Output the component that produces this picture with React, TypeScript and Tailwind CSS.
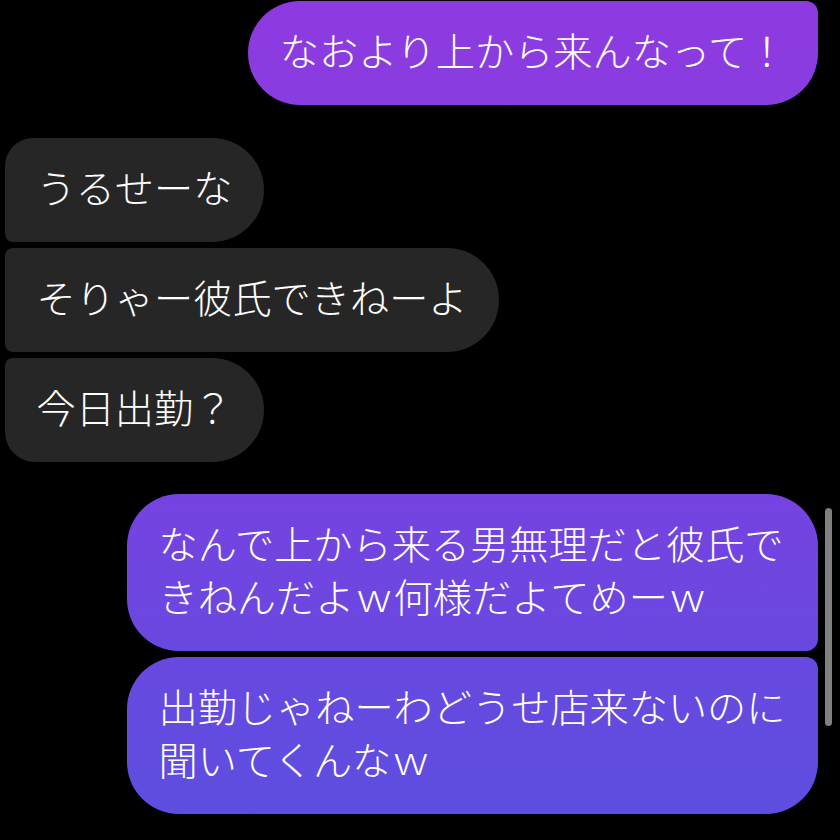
const font = { fontFamily: '"Noto Sans CJK JP", "Noto Sans", sans-serif' };

type Msg = { text: string; mine: boolean; corners: string };

const messages: Msg[] = [
  { text: 'なおより上から来んなって！', mine: true, corners: 'rounded-[52px] rounded-tr-[12px]' },
  { text: 'うるせーな', mine: false, corners: 'rounded-r-[52px] rounded-tl-[28px] rounded-bl-[8px]' },
  { text: 'そりゃー彼氏できねーよ', mine: false, corners: 'rounded-r-[52px] rounded-l-[8px]' },
  { text: '今日出勤？', mine: false, corners: 'rounded-r-[52px] rounded-tl-[8px] rounded-bl-[30px]' },
  {
    text: 'なんで上から来る男無理だと彼氏できねんだよｗ何様だよてめーｗ',
    mine: true,
    corners: 'rounded-[52px] rounded-br-[12px]',
  },
  {
    text: '出勤じゃねーわどうせ店来ないのに聞いてくんなｗ',
    mine: true,
    corners: 'rounded-[52px] rounded-tr-[12px]',
  },
];

function Bubble({ msg }: { msg: Msg }) {
  return (
    <div
      className={`max-w-[691px] px-[31.5px] pt-[21.5px] pb-[29.5px] text-[39.2px] font-light leading-[53px] text-white ${msg.corners} ${
        msg.mine
          ? 'self-end bg-fixed bg-[linear-gradient(180deg,#8d3ae0_0%,#8a3ce0_10%,#7443e0_61%,#6a48e0_76%,#5e4ee0_95%,#5b50e0_100%)]'
          : 'self-start bg-[#262626]'
      }`}
      style={font}
    >
      {msg.text}
    </div>
  );
}

export default function App() {
  return (
    <div className="relative w-[840px] h-[840px] overflow-hidden bg-black">
      <div className="flex flex-col pt-px pl-[5px] pr-[22px]">
        <Bubble msg={messages[0]} />
        <div className="flex flex-col gap-[6px] mt-[33px]">
          <Bubble msg={messages[1]} />
          <Bubble msg={messages[2]} />
          <Bubble msg={messages[3]} />
        </div>
        <div className="flex flex-col gap-[6px] mt-[32px]">
          <Bubble msg={messages[4]} />
          <Bubble msg={messages[5]} />
        </div>
      </div>
      {/* scrollbar */}
      <div className="absolute left-[825px] top-[508px] w-[7px] h-[218px] rounded-full bg-[#808080]" />
    </div>
  );
}
